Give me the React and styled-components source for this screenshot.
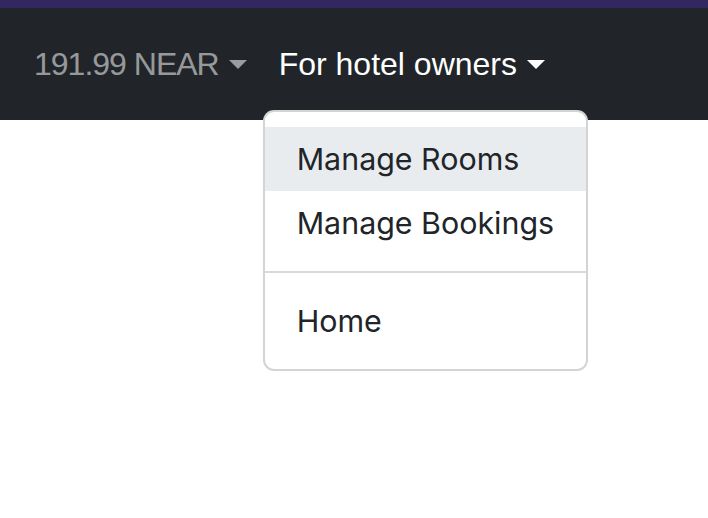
import styled, { createGlobalStyle } from "styled-components";

const Global = createGlobalStyle`
  html, body, #root { margin: 0; padding: 0; height: 100%; background: #fff; }
  body { font-family: "Liberation Sans", Arial, sans-serif; }
`;

const Page = styled.div`
  min-height: 100%;
  display: flex;
  flex-direction: column;
`;

const TopStrip = styled.div`
  height: 8px;
  background: #33275f;
`;

const Navbar = styled.nav`
  display: flex;
  align-items: center;
  background: #212529;
  padding: 16px 18px;
`;

const NavItem = styled.div`
  position: relative;
`;

const NavLink = styled.a`
  display: flex;
  align-items: center;
  padding: 16px;
  font-size: 32px;
  line-height: 48px;
  letter-spacing: ${(p) => (p.$tight ? "-1px" : "0")};
  color: ${(p) => (p.$active ? "#fff" : "rgba(255,255,255,0.55)")};
  text-decoration: none;
  cursor: pointer;

  &::after {
    content: "";
    display: inline-block;
    margin-left: 10px;
    border-top: 9px solid;
    border-right: 9px solid transparent;
    border-left: 9px solid transparent;
    border-bottom: 0;
  }
`;

const Menu = styled.div`
  position: absolute;
  top: calc(100% + 6px);
  left: 0;
  padding: 15px 0 16px;
  background: #fff;
  border: 2px solid rgba(0, 0, 0, 0.17);
  border-radius: 11px;
  font-family: Inter, "Liberation Sans", sans-serif;
  z-index: 10;
`;

const MenuItem = styled.a`
  display: block;
  padding: 8px 32px;
  font-size: 30.4px;
  line-height: 48px;
  color: #212529;
  white-space: nowrap;
  background: ${(p) => (p.$hover ? "#e9ecef" : "transparent")};
  cursor: pointer;
`;

const Divider = styled.hr`
  margin: 16px 0;
  border: 0;
  border-top: 2px solid rgba(0, 0, 0, 0.15);
  height: 0;
`;

export default function App() {
  return (
    <Page>
      <Global />
      <TopStrip />
      <Navbar>
        <NavItem>
          <NavLink $tight>191.99 NEAR</NavLink>
        </NavItem>
        <NavItem>
          <NavLink $active>For hotel owners</NavLink>
          <Menu>
            <MenuItem $hover>Manage Rooms</MenuItem>
            <MenuItem>Manage Bookings</MenuItem>
            <Divider />
            <MenuItem>Home</MenuItem>
          </Menu>
        </NavItem>
      </Navbar>
    </Page>
  );
}
